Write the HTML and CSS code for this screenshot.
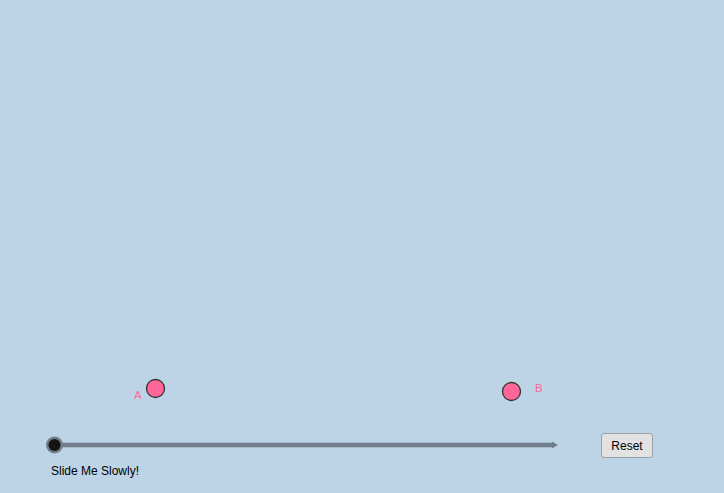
FILE: index.html
```html
<!DOCTYPE html>
<html>
<head>
<meta charset="utf-8">
<link rel="stylesheet" href="styles.css">
</head>
<body>
<div class="applet">
  <svg class="canvas" width="724" height="493" viewBox="0 0 724 493">
    <circle cx="155.5" cy="388.5" r="9" fill="#ff6699" stroke="#333" stroke-width="1.3"/>
    <text x="134" y="399" class="lbl">A</text>
    <circle cx="511.5" cy="391.5" r="9" fill="#ff6699" stroke="#333" stroke-width="1.3"/>
    <text x="535" y="392" class="lbl">B</text>
    <line x1="54" y1="445" x2="553" y2="445" stroke="#707f8b" stroke-width="4.5"/>
    <polygon points="552,441.5 558,445 552,448.5" fill="#707f8b"/>
    <circle cx="54.5" cy="445" r="8.5" fill="#6f7b85"/>
    <circle cx="54.5" cy="445" r="6" fill="#141414"/>
  </svg>
  <div class="caption">Slide Me Slowly!</div>
  <button class="reset">Reset</button>
</div>
</body>
</html>
```

FILE: styles.css
```css
html, body {
  margin: 0;
  padding: 0;
  background: #bdd3e6;
}
.applet {
  position: relative;
  width: 724px;
  height: 493px;
  background: #bdd3e6;
  overflow: hidden;
  font-family: "Liberation Sans", Arial, sans-serif;
}
.canvas {
  position: absolute;
  left: 0;
  top: 0;
}
.lbl {
  font-family: "Liberation Sans", Arial, sans-serif;
  font-size: 11.5px;
  fill: #ff6699;
}
.caption {
  position: absolute;
  left: 51px;
  top: 464px;
  font-size: 12px;
  color: #000;
  line-height: 14px;
}
.reset {
  position: absolute;
  left: 601px;
  top: 433px;
  width: 52px;
  height: 25px;
  margin: 0;
  padding: 0;
  box-sizing: border-box;
  background: #e2e2e2;
  border: 1px solid #9aa3aa;
  border-radius: 3px;
  font-family: "Liberation Sans", Arial, sans-serif;
  font-size: 12px;
  color: #000;
}
```
